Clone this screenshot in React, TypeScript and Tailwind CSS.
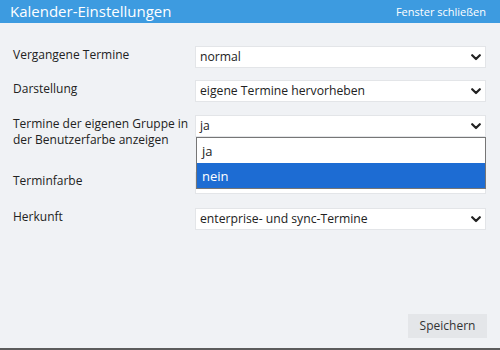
import { useState } from 'react';

function Chevron() {
  return (
    <svg width="10" height="7" viewBox="0 0 10 7" className="shrink-0">
      <path d="M1.2 1.2 L5 5 L8.8 1.2" fill="none" stroke="#222" strokeWidth="2.2" strokeLinecap="round" strokeLinejoin="round" />
    </svg>
  );
}

function Select({ value, children }: { value: string; children?: React.ReactNode }) {
  return (
    <div className="relative w-[291px] self-start">
      <div className="h-[22px] bg-white border border-[#e3e5e8] flex items-center justify-between pl-[4px] pr-[4px] text-[12.2px] text-[#222]">
        <span>{value}</span>
        <Chevron />
      </div>
      {children}
    </div>
  );
}

export default function App() {
  const [open] = useState(true);
  const font = { fontFamily: '"Open Sans", "Liberation Sans", sans-serif' };

  return (
    <div style={font} className="w-[500px] h-[350px] bg-[#f0f2f5] flex flex-col border-b-2 border-[#5c5c5c]">
      <div className="h-[23px] bg-[#3d9be0] flex items-center justify-between pl-[10px] pr-[14px] text-white">
        <span className="text-[15px] leading-none">Kalender-Einstellungen</span>
        <span className="text-[11px] leading-none">Fenster schließen</span>
      </div>

      <div className="pt-[23px] pl-[13px] text-[12px] leading-[16px] text-[#222]">
        <div className="flex h-[34px]">
          <div className="w-[182px] pt-[1px]">Vergangene Termine</div>
          <Select value="normal" />
        </div>
        <div className="flex h-[35px]">
          <div className="w-[182px] pt-[1px]">Darstellung</div>
          <Select value="eigene Termine hervorheben" />
        </div>
        <div className="flex h-[57px] relative z-10">
          <div className="w-[182px] pt-[1px]">
            Termine der eigenen Gruppe in
            <br />
            der Benutzerfarbe anzeigen
          </div>
          <Select value="ja">
            {open && (
              <div className="absolute left-[1px] top-full w-[290px] bg-white border border-[#767676] text-[13px]">
                <div className="h-[25px] flex items-center pl-[5px] text-[#222]">ja</div>
                <div className="h-[25px] flex items-center pl-[5px] bg-[#1d6cd3] text-white">nein</div>
              </div>
            )}
          </Select>
        </div>
        <div className="flex h-[36px]">
          <div className="w-[182px] pt-[1px]">Terminfarbe</div>
          <Select value="" />
        </div>
        <div className="flex h-[35px]">
          <div className="w-[182px] pt-[1px]">Herkunft</div>
          <Select value="enterprise- und sync-Termine" />
        </div>
      </div>

      <div className="mt-auto flex justify-end pr-[13px] pb-[10px]">
        <button className="w-[79px] h-[24px] bg-[#e4e6e9] text-[12px] text-[#333]">Speichern</button>
      </div>
    </div>
  );
}
